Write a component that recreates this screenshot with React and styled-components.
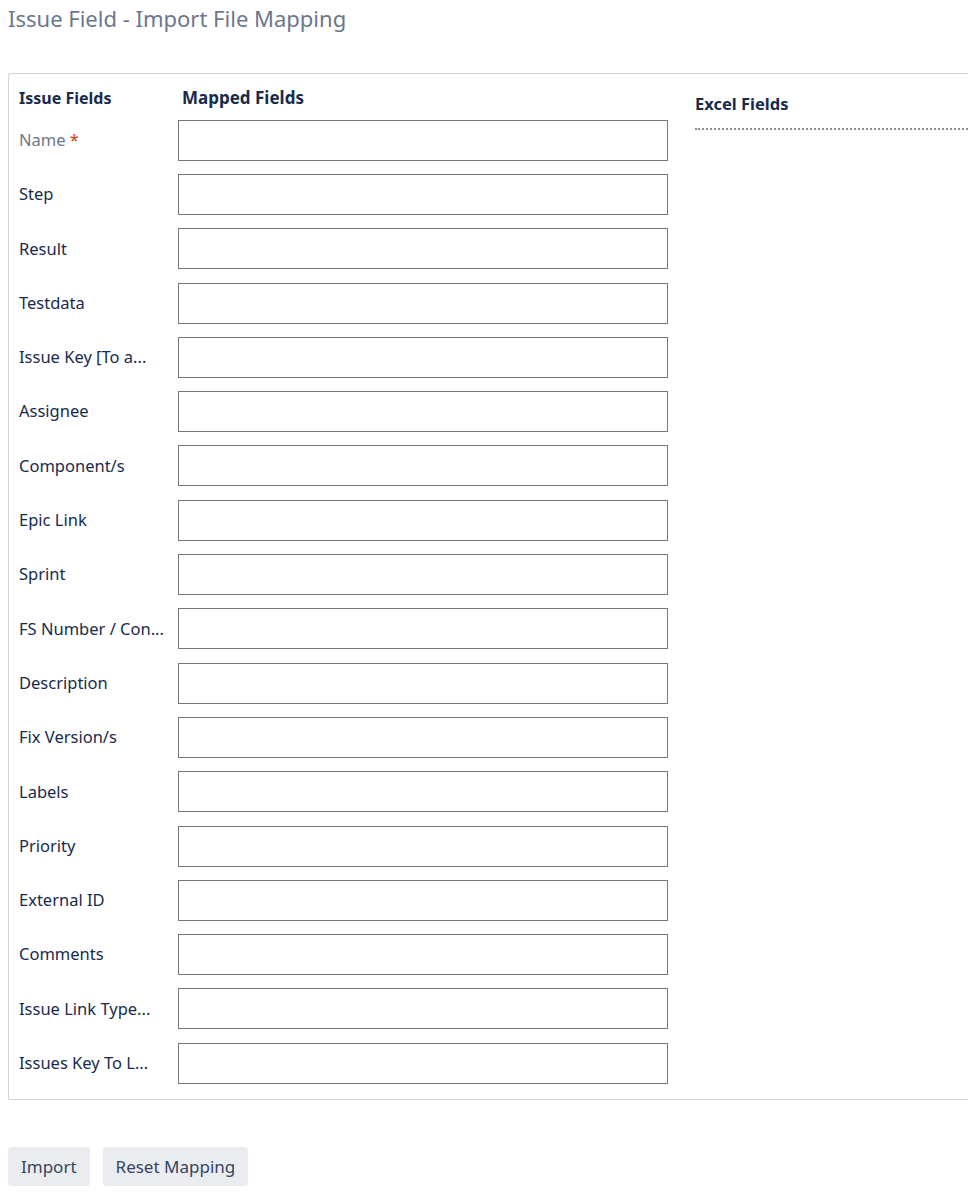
import styled, { createGlobalStyle } from "styled-components"

// labels are shown the way the mapping screen shortens them
const fields = [
    { name: 'Name', required: true },
    { name: 'Step' },
    { name: 'Result' },
    { name: 'Testdata' },
    { name: 'Issue Key [To a...' },
    { name: 'Assignee' },
    { name: 'Component/s' },
    { name: 'Epic Link' },
    { name: 'Sprint' },
    { name: 'FS Number / Con...' },
    { name: 'Description' },
    { name: 'Fix Version/s' },
    { name: 'Labels' },
    { name: 'Priority' },
    { name: 'External ID' },
    { name: 'Comments' },
    { name: 'Issue Link Type...' },
    { name: 'Issues Key To L...' },
]

const GlobalStyle = createGlobalStyle`
    body {
        margin: 8px;
        background: #fff;
        font-family: "Noto Sans", "Open Sans", sans-serif;
        color: #172b4d;
    }
`

export default function App() {
    return (
        <>
            <GlobalStyle />
            <Title>Issue Field - Import File Mapping</Title>
            <Panel>
                <MappingTable>
                    <HeadCell>Issue Fields</HeadCell>
                    <HeadCell $indent>Mapped Fields</HeadCell>
                    {fields.map((f) => (
                        <Row key={f.name}>
                            <Label $muted={f.required}>
                                {f.name}
                                {f.required && <Star> *</Star>}
                            </Label>
                            <DropBox type="text" />
                        </Row>
                    ))}
                </MappingTable>
                <ExcelColumn>
                    <ExcelHead>Excel Fields</ExcelHead>
                    <DottedRule />
                </ExcelColumn>
            </Panel>
            <Actions>
                <Button>Import</Button>
                <Button>Reset Mapping</Button>
            </Actions>
        </>
    )
}

const Title = styled.h1`
    margin: 0;
    height: 20px;
    font-size: 22px;
    font-weight: 400;
    line-height: 20px;
    color: #6b778c;
`

const Panel = styled.div`
    margin-top: 45px;
    margin-right: -8px;
    box-sizing: border-box;
    padding: 10px 0 9px 10px;
    border: 1px solid #d4d4d4;
    border-right: none;
    border-radius: 3px 0 0 3px;

    display: flex;
    gap: 27px;
`

const MappingTable = styled.div`
    display: grid;
    grid-template-columns: 159px 490px;
    align-items: center;
`

const Row = styled.div`
    display: contents;
`

const HeadCell = styled.div`
    padding-left: ${p => p.$indent ? '4px' : '0'};
    height: 29px;
    line-height: 28px;
    font-size: ${p => p.$indent ? '17px' : '16px'};
    font-weight: 700;
    color: #172b4d;
`

const Label = styled.div`
    height: 54.3px;
    line-height: 54.3px;
    font-size: 16.5px;
    color: ${p => p.$muted ? '#6b778c' : '#172b4d'};
    white-space: nowrap;
`

const Star = styled.span`
    color: #de350b;
`

const DropBox = styled.input`
    display: block;
    box-sizing: border-box;
    width: 490px;
    height: 41px;
    margin: 0;
    border: 1px solid #767676;
    border-radius: 0;
    background: #fff;
`

const ExcelColumn = styled.div`
    flex: 1;
    padding-top: 6px;
`

const ExcelHead = styled.div`
    line-height: 28px;
    font-size: 16.5px;
    font-weight: 700;
    color: #172b4d;
`

const DottedRule = styled.div`
    margin-top: 10px;
    border-top: 2px dotted #8c8c8c;
`

const Actions = styled.div`
    margin-top: 47px;
    display: flex;
    gap: 13px;
`

const Button = styled.button`
    height: 39px;
    padding: 0 13px;
    border: none;
    border-radius: 3px;
    background: #ebecf0;
    color: #344563;
    font-family: inherit;
    font-size: 17px;
    cursor: pointer;
`
